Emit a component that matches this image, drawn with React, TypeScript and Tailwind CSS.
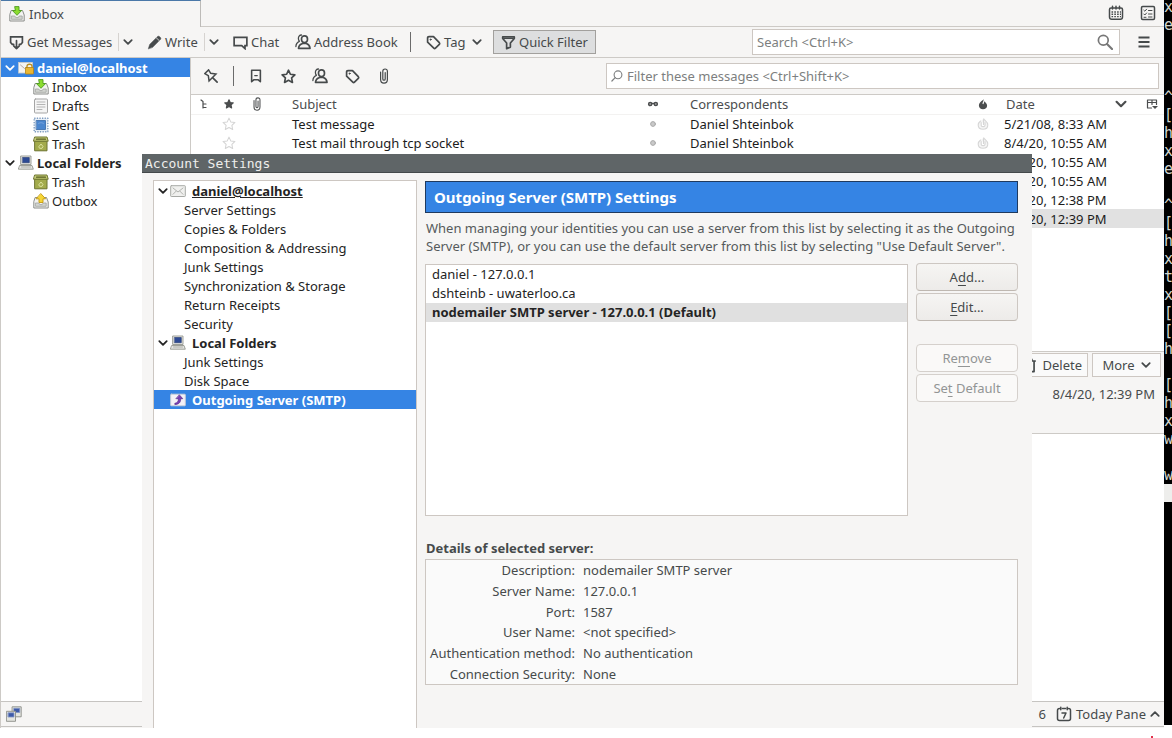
import type { ReactNode } from "react";

type IconProps = { className?: string };

function Svg({ className = "size-4", box = 16, children }: { className?: string; box?: number; children: ReactNode }) {
  return (
    <svg
      viewBox={`0 0 ${box} ${box}`}
      className={`${className} shrink-0`}
      fill="none"
      stroke="currentColor"
      strokeWidth="1.8"
      strokeLinejoin="round"
      strokeLinecap="round"
      aria-hidden="true"
    >
      {children}
    </svg>
  );
}

const Chevron = ({ className = "size-2.5" }: IconProps) => (
  <Svg className={className} box={10}>
    <path d="M1.300 3.200 5 6.800l3.700-3.600" />
  </Svg>
);
const ChevronUp = () => (
  <Svg className="size-2.5" box={10}>
    <path d="M1.300 6.800 5 3.200l3.700 3.600" />
  </Svg>
);
const GetIcon = () => (
  <Svg className="size-[15px]">
    <path strokeLinejoin="miter" d="M5 10H3.500L1.700 8V2h12.600v6l-1.800 2H11" />
    <path d="M8 6v8.500M5 11.600l3 3 3-3" />
  </Svg>
);
const PencilIcon = () => (
  <Svg className="size-[15px]">
    <path fill="currentColor" strokeWidth="0.6" d="m1.500 14.500 1.400-4.500L9.500 3.400l3.100 3.100L6 13.100zM10.300 2.600l1.400-1.300h1.200l1.800 1.800v1.200l-1.300 1.400z" />
  </Svg>
);
const ChatIcon = () => (
  <Svg className="size-[15px]">
    <path strokeLinejoin="miter" d="M1.200 2.500h13.600v8.800h-2v3.200L9.300 11.300H1.200z" />
  </Svg>
);
const PeopleIcon = () => (
  <Svg>
    <path strokeWidth="1.700" d="M9.500 1.800c2 0 3 1.500 3 3.300S11.500 8.700 9.500 8.700s-3-1.600-3-3.600 1-3.300 3-3.300zM3.500 14.300c.2-2.800 1.500-4 4.200-4.800h3.600c2.400.8 3.500 2.200 3.700 4.800z" />
    <path strokeWidth="1.300" d="M6.500 1C4.300 1 3.400 2.700 3.400 4.500c0 1.200.3 2 1 2.800C2.200 8.200 1 9.800.9 12.500" />
  </Svg>
);
const TagIcon = () => (
  <Svg className="size-[15px]">
    <path d="M1.700 3.200c0-1 .5-1.500 1.500-1.500H8l6.200 6.500c.5.600.5 1.200 0 1.800l-4.100 4c-.6.600-1.200.6-1.800 0L1.700 7.700z" />
    <circle cx="4.900" cy="4.900" r=".6" fill="currentColor" strokeWidth="1" />
  </Svg>
);
const FunnelIcon = () => (
  <Svg className="size-[15px]">
    <path d="M1.800 2h12.400v1.800L10 8.600v4.300L6 14.500V8.600L1.800 3.800z" />
    <path d="M3 3.600h10" strokeWidth="1.400" />
  </Svg>
);
const PinIcon = () => (
  <Svg className="size-[15px]">
    <g transform="rotate(-45 8 8)">
      <path strokeWidth="1.600" strokeLinejoin="miter" d="M5.200.8h5.600L9.800 5l3.400 4.500H2.800L6.200 5z" />
      <path d="M8 10v6.500" />
    </g>
  </Svg>
);
const BookmarkIcon = () => (
  <Svg className="size-3.5">
    <path d="M3 1.500h10v13l-2.800-2.300H5.800L3 14.500z" strokeWidth="1.800" />
    <path d="M6.500 7.500h3" strokeWidth="1.300" />
  </Svg>
);
const starPath = "m8 1.300 2 4.300 4.800.6-3.500 3.300.9 4.800L8 12l-4.200 2.300.9-4.800L1.200 6.200l4.800-.6z";
const StarIcon = () => (
  <Svg className="size-[15px]">
    <path d={starPath} />
  </Svg>
);
const ClipIcon = ({ className = "size-4" }: IconProps) => (
  <Svg className={className}>
    <path strokeWidth="1.200" d="M4.600 4v7.500c0 2 1.200 3.600 3.400 3.600s3.400-1.600 3.400-3.600V3.200C11.400 1.800 10.500 1 9.100 1S6.800 1.800 6.800 3.200v7.700c0 .8.400 1.300 1.200 1.300s1.200-.5 1.200-1.300V4.500" />
  </Svg>
);
const ThreadIcon = () => (
  <Svg className="mx-auto size-3" box={12}>
    <path strokeWidth="1.200" d="m3 2 2 1.500v6.500M5 6h3M5 9.500h3" />
  </Svg>
);
const ReadIcon = () => (
  <Svg className="mx-auto size-3" box={12}>
    <circle cx="3.200" cy="6" r="1.600" fill="#999" strokeWidth="1.400" />
    <circle cx="8.800" cy="6" r="1.600" fill="#999" strokeWidth="1.400" />
    <path strokeWidth="1.300" d="M5 5.500h2" />
  </Svg>
);
const DotIcon = () => (
  <Svg className="mx-auto size-2" box={8}>
    <circle cx="4" cy="4" r="2.400" fill="#c9c9c9" stroke="#a9a9a9" strokeWidth="1" />
  </Svg>
);
const FlameIcon = () => (
  <Svg className="mx-auto size-3" box={12}>
    <path fill="currentColor" stroke="none" d="M6.500 1C7 3 5.500 4 5.500 5.500c0 .8 1 .9 1.200.1.200-.9.300-1.400 1-2.300.1 1 2.400 2 2.400 4.200C10.100 10 8.400 11.300 6 11.300S1.900 9.800 1.900 7.500c0-1.600.8-2.600 1.600-3.500C4.400 3 6.200 2.300 6.500 1z" />
  </Svg>
);
const JunkIcon = () => (
  <Svg className="mx-auto size-3" box={12}>
    <path fill="#f4f4f4" stroke="#d6d6d6" strokeWidth="1.100" d="M6.800.8C7 2.200 10.800 3.500 10.800 7c0 2.600-2 4.300-4.800 4.300S1.200 9.600 1.200 7c0-2 1.300-3.200 2.300-4M6.500 1.500v5M4.200 4.500v2.700c0 1.900 3.800 1.900 3.800 0V4.500" />
  </Svg>
);
const PickerIcon = () => (
  <Svg className="mx-auto size-3" box={12}>
    <path strokeWidth="1.200" d="M5.500 10H1.500V2h9v4.500M1.500 4.500h9M6 2v4.500" />
    <path fill="currentColor" stroke="none" d="M6 8h6l-3 3z" />
  </Svg>
);
const CalendarIcon = () => (
  <Svg>
    <path strokeWidth="1.500" d="M3 3h10c1 0 1.500.5 1.500 1.500V12c0 1.500-.8 2.300-2.300 2.300H3.800C2.300 14.300 1.500 13.500 1.500 12V4.500C1.500 3.500 2 3 3 3zM4.500 1.200V4M8 1.200V4M11.500 1.200V4" />
    <path strokeWidth="1.400" strokeDasharray="1.600 1.200" strokeLinecap="butt" d="M3.500 7h9.500M3.500 9.300h9.500M3.500 11.600h9.500" />
  </Svg>
);
const TasksIcon = () => (
  <Svg>
    <rect x="1.500" y="1.500" width="13" height="13" rx="1.200" strokeWidth="1.500" />
    <path strokeWidth="1" d="m3.800 5.200 1 1 1.800-2M3.800 9l1 1 1.800-2M4 12.300h2M8.500 5.500h3.500M8.500 9h3.500M8.500 12h3.500" />
  </Svg>
);
const TodayIcon = () => (
  <Svg>
    <path strokeWidth="1.500" d="M3.500 2.600C2 2.600 1.500 3.200 1.500 4.500v8c0 1.300.7 2 2 2h9c1.300 0 2-.7 2-2v-8c0-1.300-.5-1.900-2-1.900M6.500 2.600h3M4.800 1.300v2.500M11.200 1.300v2.500" />
    <path strokeWidth="1.500" d="M6 7h4l-2.300 5" />
  </Svg>
);
const SearchIcon = () => (
  <Svg className="size-4">
    <circle cx="6.300" cy="6.300" r="4.900" strokeWidth="1.700" />
    <path strokeWidth="2.100" d="m10 10 5 5" />
  </Svg>
);
const SmallSearchIcon = () => (
  <Svg className="size-3" box={12}>
    <circle cx="7" cy="4.800" r="3.900" strokeWidth="1.100" />
    <path strokeWidth="1.200" d="M4.200 7.600.9 11" />
  </Svg>
);
const MenuIcon = () => (
  <Svg>
    <path strokeLinecap="butt" d="M2.500 3.500h11M2.500 8h11M2.500 12.500h11" />
  </Svg>
);
const TrayIcon = ({ outgoing }: { outgoing?: boolean }) => (
  <Svg>
    <path fill="#f3f3f1" stroke="#8b8d8a" strokeWidth="1" d="M2.500 4.500h11l1.700 4.500v6H.8V9z" />
    <path fill="#d2d4d0" stroke="#a0a29e" strokeWidth=".8" d="M2.800 10h3l1 1.600h2.400l1-1.600h3v3.300H2.800z" />
    {outgoing ? (
      <path fill="#f6d636" stroke="#c49a10" strokeWidth=".9" d="m8 .8 4.600 5H10v3.700H6V5.800H3.400z" />
    ) : (
      <path fill="#8bdc2f" stroke="#4e9a22" strokeWidth=".9" d="M6 .6h4v3.900h2.600L8 9.300 3.400 4.500H6z" />
    )}
  </Svg>
);
const InboxIcon = () => <TrayIcon />;
const OutboxIcon = () => <TrayIcon outgoing />;
const DraftsIcon = () => (
  <Svg>
    <rect x="1.500" y="1" width="13" height="14" rx="1" fill="#f5f5f5" stroke="#a5a5a5" strokeWidth="1" />
    <path stroke="#b5b5b5" strokeWidth="1" d="M4 4h8M4 6.500h8M4 9h8M4 11.500h5" />
  </Svg>
);
const SentIcon = () => (
  <Svg>
    <rect x="1.200" y="1.200" width="13.600" height="13.600" fill="#e9f0f7" stroke="#7f9cc0" strokeWidth="1.400" strokeDasharray="1.300 1.300" strokeLinecap="butt" />
    <rect x="3.500" y="3.500" width="9" height="9" fill="#4a86cf" stroke="#3668a8" strokeWidth=".8" />
    <path stroke="#6a9ad8" strokeWidth="1.200" d="M5.500 6.500c1.500-1 3.500-1 5 0" />
  </Svg>
);
const TrashIcon = () => (
  <Svg>
    <path fill="#a3ab4c" stroke="#6d7430" strokeWidth="1" d="M2 5h12v9.800H2z" />
    <path fill="#c4cc74" stroke="#6d7430" strokeWidth="1" d="M2 1h12l1.200 4.200H.8z" />
    <path stroke="#565c22" strokeWidth="1.200" d="M3.500 3.200h9" />
    <path stroke="#dde39f" strokeWidth="1" d="M6 10.500 8 8l2 2.500-1 1.800H7z" />
  </Svg>
);
const ComputerIcon = () => (
  <Svg>
    <path fill="#e5e5e2" stroke="#94968f" strokeWidth=".9" d="M3 1h10v8.500H3zM2 10.500h12l1.300 3.700H.7z" />
    <path fill="#2d4a94" stroke="#20366e" strokeWidth=".6" d="M4.700 2.500h6.600v5.200H4.700z" />
    <path stroke="#a5a7a1" strokeWidth=".9" d="M3.500 12h9" />
  </Svg>
);
const MailIcon = () => (
  <Svg>
    <rect x=".7" y="2.700" width="14.600" height="10.800" rx=".6" fill="#f0f0ee" stroke="#a7a9a5" strokeWidth="1" />
    <path stroke="#b1b3af" strokeWidth="1" d="m3 5 5 4 5-4M3 11.300l3-3M13 11.300l-3-3" />
  </Svg>
);
const LockedMailIcon = () => (
  <Svg>
    <rect x=".5" y="2.500" width="14" height="10.500" fill="#f4f4f2" stroke="#c9cbc7" strokeWidth=".9" />
    <path stroke="#b9aaa7" strokeWidth="1" d="m2.500 5 4 3.500L8 7.500" />
    <path stroke="#b98d20" strokeWidth="1.300" d="M9 8V6.200C9 3.600 14 3.600 14 6.200V8" />
    <rect x="7.500" y="7.500" width="8" height="6.500" rx=".6" fill="#e9b632" stroke="#b58412" strokeWidth=".8" />
  </Svg>
);
const SmtpIcon = () => (
  <Svg>
    <rect x=".7" y="2.200" width="14.600" height="11.600" rx=".6" fill="#f4f1f7" stroke="#cfd0d4" strokeWidth=".9" />
    <path fill="#7a3fb5" stroke="#4e2485" strokeWidth=".6" d="m9.500 3 3.300 3.700h-2.100c0 3-1 5-4.500 5.800H4.800v-1.200c2.500-.4 3.600-1.900 3.600-4.600H6.200z" />
  </Svg>
);
const OnlineIcon = () => (
  <Svg>
    <path fill="#e3e5e0" stroke="#8b8d88" strokeWidth=".9" d="M6.500.8h8.700v10H6.500z" />
    <path fill="#3d5aa8" stroke="#8396c7" strokeWidth=".8" d="M8 2.300h5.700v4.200H8z" />
    <path fill="#e3e5e0" stroke="#8b8d88" strokeWidth=".9" d="M.8 5.300h8.700v10H.8z" />
    <path fill="#3d5aa8" stroke="#8396c7" strokeWidth=".8" d="M2.300 6.800H8V11H2.300z" />
  </Svg>
);
const DeleteIcon = () => (
  <Svg className="size-[15px]">
    <path d="M1.500 3.200h11.500M5.500 3.200V1.500h4v1.700M3.200 3.500v11h8.600v-11" />
  </Svg>
);

const iconButton = "flex w-8 items-center justify-center";

function TabBar() {
  return (
    <div className="flex h-[27px]">
      <button className="flex w-[200px] items-center gap-1 border-t border-r border-t-[#4a78a8] border-r-[#bdbbb8] pl-2">
        <InboxIcon />
        Inbox
      </button>
      <div className="flex flex-1 items-center justify-end gap-4 border-b border-[#cdcac6] pr-2">
        <button aria-label="Calendar" className="block"><CalendarIcon /></button>
        <button aria-label="Tasks" className="block"><TasksIcon /></button>
      </div>
    </div>
  );
}

function ToolButton({ icon, label }: { icon: ReactNode; label: string }) {
  return (
    <button className="flex items-center gap-[3px]">
      {icon}
      {label}
    </button>
  );
}

function Toolbar() {
  return (
    <div className="flex h-[31px] items-center border-b border-[#cdcac6] pr-3 pl-2">
      <div className="flex w-56 items-center">
        <div className="flex w-[138px] items-center">
          <ToolButton icon={<GetIcon />} label="Get Messages" />
          <button aria-label="Get messages menu" className="ml-1.5 border-l border-[#d6d3d0] py-1 pl-1"><Chevron /></button>
        </div>
        <ToolButton icon={<PencilIcon />} label="Write" />
        <button aria-label="Write menu" className="ml-1.5 border-l border-[#d6d3d0] py-1 pl-1"><Chevron /></button>
      </div>
      <div className="flex w-[62px] items-center"><ToolButton icon={<ChatIcon />} label="Chat" /></div>
      <div className="flex w-[115px] items-center"><ToolButton icon={<PeopleIcon />} label="Address Book" /></div>
      <div className="h-5 w-4 border-l border-[#6b6b6b]" />
      <button className="flex w-[67px] items-center gap-[3px]">
        <TagIcon />
        Tag
        <Chevron className="ml-1 size-2.5" />
      </button>
      <button className="flex h-6 w-[103px] items-center justify-center gap-[3px] border border-[#a2a09d] bg-[#dddedf]">
        <FunnelIcon />
        Quick Filter
      </button>
      <div className="ml-auto flex h-[26px] w-[368px] items-center border border-[#cdc7c2] bg-white px-1">
        <input aria-label="Search" placeholder="Search <Ctrl+K>" className="min-w-0 flex-1 outline-none placeholder:text-[#7d7f80]" />
        <button aria-label="Run search" className="mr-0.5 text-[#777]"><SearchIcon /></button>
      </div>
      <button aria-label="Application menu" className="ml-4"><MenuIcon /></button>
    </div>
  );
}

const folders = [
  { name: "daniel@localhost", icon: <LockedMailIcon />, root: true, selected: true },
  { name: "Inbox", icon: <InboxIcon /> },
  { name: "Drafts", icon: <DraftsIcon /> },
  { name: "Sent", icon: <SentIcon /> },
  { name: "Trash", icon: <TrashIcon /> },
  { name: "Local Folders", icon: <ComputerIcon />, root: true },
  { name: "Trash", icon: <TrashIcon /> },
  { name: "Outbox", icon: <OutboxIcon /> },
];

function FolderPane() {
  return (
    <nav aria-label="Folders" className="w-[190px] border-r border-[#cdcac6] bg-white text-[#242424]">
      <ul>
        {folders.map((f, i) => (
          <li key={i}>
            <button
              className={`flex h-[19px] w-full items-center gap-[3px] ${f.root ? "pl-1 font-bold" : "pl-8"} ${f.selected ? "bg-[#3584e4] text-white" : ""}`}
            >
              {f.root && <Chevron />}
              {f.icon}
              {f.name}
            </button>
          </li>
        ))}
      </ul>
    </nav>
  );
}

function FilterBar() {
  return (
    <div className="flex h-[37px] items-center border-b border-[#cdcac6] pr-[5px] pl-1">
      <button aria-label="Keep filters" className={iconButton}><PinIcon /></button>
      <div className="mx-1.5 h-5 border-l border-[#6b6b6b]" />
      <button aria-label="Unread" className={iconButton}><BookmarkIcon /></button>
      <button aria-label="Starred" className={iconButton}><StarIcon /></button>
      <button aria-label="Contact" className={iconButton}><PeopleIcon /></button>
      <button aria-label="Tags" className={iconButton}><TagIcon /></button>
      <button aria-label="Attachment" className={iconButton}><ClipIcon /></button>
      <div className="ml-auto flex h-[26px] w-[553px] items-center gap-1 border border-[#cdc7c2] bg-white px-1 text-[#7d7f80]">
        <SmallSearchIcon />
        <input aria-label="Filter messages" placeholder="Filter these messages <Ctrl+Shift+K>" className="min-w-0 flex-1 outline-none placeholder:text-[#7d7f80]" />
      </div>
    </div>
  );
}

const messages = [
  { subject: "Test message", from: "Daniel Shteinbok", date: "5/21/08, 8:33 AM" },
  { subject: "Test mail through tcp socket", from: "Daniel Shteinbok", date: "8/4/20, 10:55 AM" },
  { date: "8/4/20, 10:55 AM" },
  { date: "8/4/20, 10:55 AM" },
  { date: "8/4/20, 12:38 PM" },
  { date: "8/4/20, 12:39 PM", selected: true },
];

function MessageList() {
  return (
    <div className="h-[256px] bg-white">
      <table className="w-full table-fixed border-collapse text-left text-[#1c1c1c]">
        <colgroup>
          <col className="w-[25px]" />
          <col className="w-[26px]" />
          <col className="w-[30px]" />
          <col />
          <col className="w-[26px]" />
          <col className="w-[304px]" />
          <col className="w-[26px]" />
          <col className="w-[143px]" />
          <col className="w-[25px]" />
        </colgroup>
        <thead>
          <tr className="h-[19px] border-b border-[#f3f2f1] text-[#4b4d4e]">
            <th aria-label="Thread" className="p-0"><ThreadIcon /></th>
            <th aria-label="Starred" className="p-0">
              <Svg className="mx-auto size-2.5"><path d={starPath} fill="currentColor" /></Svg>
            </th>
            <th aria-label="Attachments" className="p-0"><ClipIcon className="mx-auto size-3.5" /></th>
            <th className="p-0 pl-5 font-normal">Subject</th>
            <th aria-label="Read" className="p-0"><ReadIcon /></th>
            <th className="p-0 pl-6 font-normal">Correspondents</th>
            <th aria-label="Junk" className="p-0"><FlameIcon /></th>
            <th className="p-0 pl-2.5 font-normal">
              <span className="flex items-center justify-between pr-3">
                Date <Chevron className="size-3" />
              </span>
            </th>
            <th aria-label="Columns" className="p-0"><PickerIcon /></th>
          </tr>
        </thead>
        <tbody>
          {messages.map((m, i) => (
            <tr key={i} className={m.selected ? "h-[19px] bg-[#e1e1e1]" : "h-[19px]"}>
              <td className="p-0" />
              <td className="p-0">
                <Svg className="mx-auto size-3.5 text-[#d4d4d4]"><path d={starPath} strokeWidth="1.200" /></Svg>
              </td>
              <td className="p-0" />
              <td className="truncate p-0 pl-5">{m.subject}</td>
              <td className="p-0"><DotIcon /></td>
              <td className="truncate p-0 pl-6">{m.from}</td>
              <td className="p-0"><JunkIcon /></td>
              <td className="p-0 pl-2">{m.date}</td>
              <td className="p-0" />
            </tr>
          ))}
        </tbody>
      </table>
    </div>
  );
}

function MessagePane() {
  return (
    <>
      <div className="h-[83px] border-y border-[#cdcac6] pt-px pr-[3px]">
        <div className="flex justify-end gap-1">
          <button className="flex h-6 items-center gap-1 border border-[#cdc7c2] bg-[#fafafa] px-[5px]">
            <DeleteIcon />
            Delete
          </button>
          <button className="flex h-6 w-[69px] items-center justify-center gap-1.5 border border-[#cdc7c2] bg-[#fafafa]">
            More
            <Chevron />
          </button>
        </div>
        <p className="mt-2 pr-1.5 text-right">8/4/20, 12:39 PM</p>
      </div>
      <div className="flex-1 bg-white" />
    </>
  );
}

function StatusBar() {
  return (
    <footer className="mb-px flex h-[26px] items-center gap-2.5 border-y border-[#c6c4c1] pr-1 pl-[5px]">
      <OnlineIcon />
      <span className="ml-auto">6</span>
      <button className="flex items-center gap-1">
        <TodayIcon />
        Today Pane
        <ChevronUp />
      </button>
    </footer>
  );
}

const accountTree = [
  { name: "daniel@localhost", icon: <MailIcon />, open: true, underline: true },
  { name: "Server Settings" },
  { name: "Copies & Folders" },
  { name: "Composition & Addressing" },
  { name: "Junk Settings" },
  { name: "Synchronization & Storage" },
  { name: "Return Receipts" },
  { name: "Security" },
  { name: "Local Folders", icon: <ComputerIcon />, open: true },
  { name: "Junk Settings" },
  { name: "Disk Space" },
  { name: "Outgoing Server (SMTP)", icon: <SmtpIcon />, selected: true },
];

const servers = ["daniel - 127.0.0.1", "dshteinb - uwaterloo.ca", "nodemailer SMTP server - 127.0.0.1 (Default)"];

const details = [
  ["Description:", "nodemailer SMTP server"],
  ["Server Name:", "127.0.0.1"],
  ["Port:", "1587"],
  ["User Name:", "<not specified>"],
  ["Authentication method:", "No authentication"],
  ["Connection Security:", "None"],
];

function PushButton({ before, hot, after, disabled }: { before: string; hot: string; after: string; disabled?: boolean }) {
  return (
    <button
      disabled={disabled}
      className={`h-7 w-full rounded border ${
        disabled ? "border-[#d5d0cc] bg-[#faf9f8] text-[#929595]" : "border-[#cdc7c2] border-b-[#bfb8b1] bg-linear-to-t from-[#edebe9] to-[#f6f5f3]"
      }`}
    >
      {before}
      <span className="underline underline-offset-3">{hot}</span>
      {after}
    </button>
  );
}

function AccountSettings() {
  return (
    <section
      role="dialog"
      aria-labelledby="dialog-title"
      className="absolute top-[154px] right-[132px] bottom-0 left-[141px] flex flex-col bg-[#f6f5f4]"
    >
      <h1 id="dialog-title" className="h-[19px] border-b border-[#44494b] bg-[#5f6567] pl-[3px] font-['DejaVu_Sans_Mono',monospace] text-[13px] leading-[19px] text-[#eeeeec]">
        Account Settings
      </h1>
      <div className="flex flex-1 gap-2 pt-[7px] pr-3.5 pl-[11px]">
        <ul className="w-[264px] border border-b-0 border-[#cdc7c2] bg-white text-[#242424]">
          {accountTree.map((n, i) => (
            <li key={i}>
              <button
                className={`flex h-[19px] w-full items-center ${n.icon ? "gap-1.5 font-bold" : "pl-[30px]"} ${n.open ? "pl-1" : ""} ${
                  n.selected ? "bg-[#3584e4] pl-4 text-white" : ""
                }`}
              >
                {n.icon && (
                  <span className="flex items-center gap-0.5">
                    {n.open && <Chevron />}
                    {n.icon}
                  </span>
                )}
                <span className={n.underline ? "underline" : ""}>{n.name}</span>
              </button>
            </li>
          ))}
        </ul>
        <div className="min-w-0 flex-1 pt-px">
          <h2 className="flex h-8 items-center border border-[#1f3a5f] bg-[#3584e4] pl-2 text-[15px] font-bold text-white">
            Outgoing Server (SMTP) Settings
          </h2>
          <p className="mt-1.5 pl-px leading-[18px] whitespace-nowrap text-[#555a5b]">
            When managing your identities you can use a server from this list by selecting it as the Outgoing
            <br />
            Server (SMTP), or you can use the default server from this list by selecting "Use Default Server".
          </p>
          <div className="mt-2 flex gap-2">
            <ul className="mt-px h-[252px] flex-1 border border-[#cdc7c2] bg-white text-[#242424]">
              {servers.map((s, i) => (
                <li key={s} className={`h-[19px] pl-1.5 leading-[19px] ${i === 2 ? "bg-[#e0e0e0] font-bold" : ""}`}>
                  {s}
                </li>
              ))}
            </ul>
            <div className="flex w-[102px] flex-col gap-0.5">
              <PushButton before="A" hot="d" after="d..." />
              <PushButton before="" hot="E" after="dit..." />
              <div className="h-[19px]" />
              <PushButton before="Re" hot="m" after="ove" disabled />
              <PushButton before="Se" hot="t" after=" Default" disabled />
            </div>
          </div>
          <h3 className="mt-[23px] h-5 pl-px font-bold">Details of selected server:</h3>
          <div className="border border-[#cdc7c2] bg-[#fafafa]">
            <table className="h-[124px]">
              <tbody>
                {details.map(([k, v]) => (
                  <tr key={k}>
                    <th scope="row" className="w-[149px] p-0 text-right font-normal whitespace-nowrap">{k}</th>
                    <td className="p-0 pl-2 whitespace-nowrap">{v}</td>
                  </tr>
                ))}
              </tbody>
            </table>
          </div>
        </div>
      </div>
    </section>
  );
}

const terminalLines = ["x", "e", "", "", "", "^", "[", "h", "x", "e", "", "^", "[", "h", "x", "t", "x", "[", "[", "h", "", "[", "h", "x", "w", "", "w"];

function Terminal() {
  return (
    <aside aria-label="Terminal" className="mb-[3px] w-2 overflow-hidden bg-black font-['DejaVu_Sans_Mono',monospace] text-[15px] text-[#d3d7cf]">
      <div className="-mt-0.5">
        {terminalLines.map((t, i) => (
          <div key={i} className="h-[18px] leading-[18px]">{t}</div>
        ))}
        <div className="h-[18px] bg-[#eeeeec]" />
      </div>
    </aside>
  );
}

export default function App() {
  return (
    <div className="flex min-h-screen flex-col bg-white font-['Noto_Sans',sans-serif] text-[13px] leading-[18px] text-[#464a4b]">
      <div className="flex flex-1">
        <main className="relative flex min-w-0 flex-1 flex-col border-l border-[#cdcac6] bg-[#f6f5f4]">
          <TabBar />
          <Toolbar />
          <div className="flex flex-1">
            <FolderPane />
            <div className="flex min-w-0 flex-1 flex-col">
              <FilterBar />
              <MessageList />
              <MessagePane />
            </div>
          </div>
          <StatusBar />
          <AccountSettings />
        </main>
        <Terminal />
      </div>
      <div className="flex h-2.5 items-end justify-end pr-[19px]">
        <span className="size-0.5 bg-[#e0304a]" />
      </div>
    </div>
  );
}
